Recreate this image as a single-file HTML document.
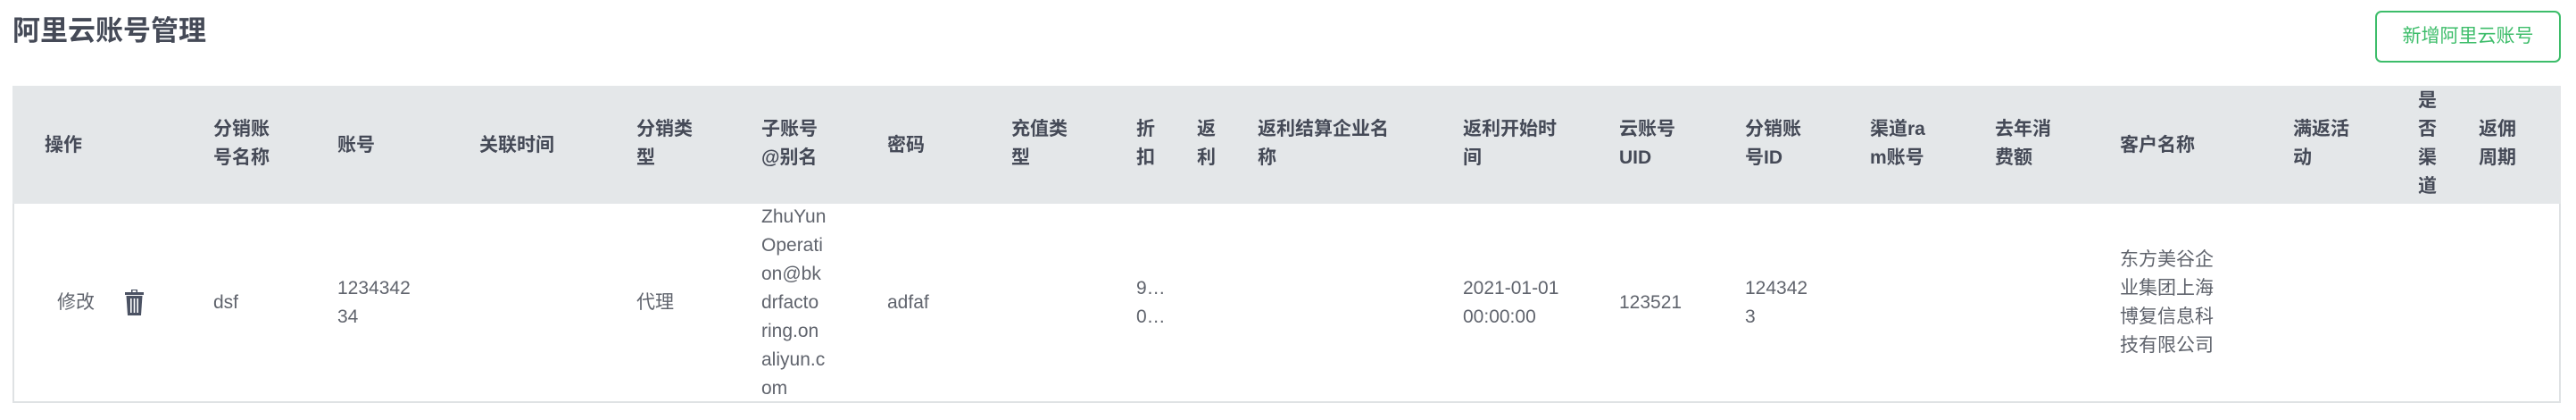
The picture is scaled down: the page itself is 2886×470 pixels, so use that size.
<!DOCTYPE html>
<html><head><meta charset="utf-8"><style>
html,body{margin:0;padding:0;width:2886px;height:470px;background:#fff;overflow:hidden;font-family:"Liberation Sans","Noto Sans CJK SC",sans-serif;}
.t{position:absolute;white-space:nowrap;line-height:32px;}
.h{font-size:21px;font-weight:bold;color:#454a57;}
.b{font-size:21px;color:#60646d;}
</style></head><body>
<div class="t" style="left:14px;top:15px;font-size:31px;font-weight:bold;color:#454a57;line-height:40px;">阿里云账号管理</div>
<div style="position:absolute;left:2661px;top:12px;width:204px;height:54px;border:2px solid #3dbd6a;border-radius:7px;color:#3dbd6a;font-size:21px;text-align:center;line-height:54px;">新增阿里云账号</div>
<div style="position:absolute;left:14px;top:96px;width:2855px;height:355px;border:2px solid #dfe2e4;border-top:none;box-sizing:border-box;"></div>
<div style="position:absolute;left:14px;top:96px;width:2855px;height:132px;background:#e4e7e9;"></div>

<div class="t h" style="left:50px;top:147px">操作</div>
<div class="t h" style="left:239px;top:129px">分销账<br>号名称</div>
<div class="t h" style="left:378px;top:147px">账号</div>
<div class="t h" style="left:537px;top:147px">关联时间</div>
<div class="t h" style="left:713px;top:129px">分销类<br>型</div>
<div class="t h" style="left:853px;top:129px">子账号<br>@别名</div>
<div class="t h" style="left:994px;top:147px">密码</div>
<div class="t h" style="left:1133px;top:129px">充值类<br>型</div>
<div class="t h" style="left:1273px;top:129px">折<br>扣</div>
<div class="t h" style="left:1341px;top:129px">返<br>利</div>
<div class="t h" style="left:1409px;top:129px">返利结算企业名<br>称</div>
<div class="t h" style="left:1639px;top:129px">返利开始时<br>间</div>
<div class="t h" style="left:1814px;top:129px">云账号<br>UID</div>
<div class="t h" style="left:1955px;top:129px">分销账<br>号ID</div>
<div class="t h" style="left:2095px;top:129px">渠道ra<br>m账号</div>
<div class="t h" style="left:2235px;top:129px">去年消<br>费额</div>
<div class="t h" style="left:2375px;top:147px">客户名称</div>
<div class="t h" style="left:2569px;top:129px">满返活<br>动</div>
<div class="t h" style="left:2709px;top:97px">是<br>否<br>渠<br>道</div>
<div class="t h" style="left:2777px;top:129px">返佣<br>周期</div>

<div class="t b" style="left:64px;top:323px">修改</div>
<svg style="position:absolute;left:139px;top:323px" width="23" height="31" viewBox="0 0 23 31"><path d="M8 1h7v3h7v3H1V4h7z" fill="#4b5263"/><rect x="9.5" y="2" width="4" height="2" fill="#fff"/><path d="M2.5 8h18l-1.5 22H4z" fill="#4b5263"/><rect x="7" y="11" width="1.6" height="16" fill="#fff"/><rect x="10.7" y="11" width="1.6" height="16" fill="#fff"/><rect x="14.4" y="11" width="1.6" height="16" fill="#fff"/></svg>
<div class="t b" style="left:239px;top:323px">dsf</div>
<div class="t b" style="left:378px;top:307px">1234342<br>34</div>
<div class="t b" style="left:713px;top:323px">代理</div>
<div class="t b" style="left:853px;top:227px">ZhuYun<br>Operati<br>on@bk<br>drfacto<br>ring.on<br>aliyun.c<br>om</div>
<div class="t b" style="left:994px;top:323px">adfaf</div>
<div class="t b" style="left:1273px;top:307px">9…<br>0…</div>
<div class="t b" style="left:1639px;top:307px">2021-01-01<br>00:00:00</div>
<div class="t b" style="left:1814px;top:323px">123521</div>
<div class="t b" style="left:1955px;top:307px">124342<br>3</div>
<div class="t b" style="left:2375px;top:275px">东方美谷企<br>业集团上海<br>博复信息科<br>技有限公司</div>
</body></html>
